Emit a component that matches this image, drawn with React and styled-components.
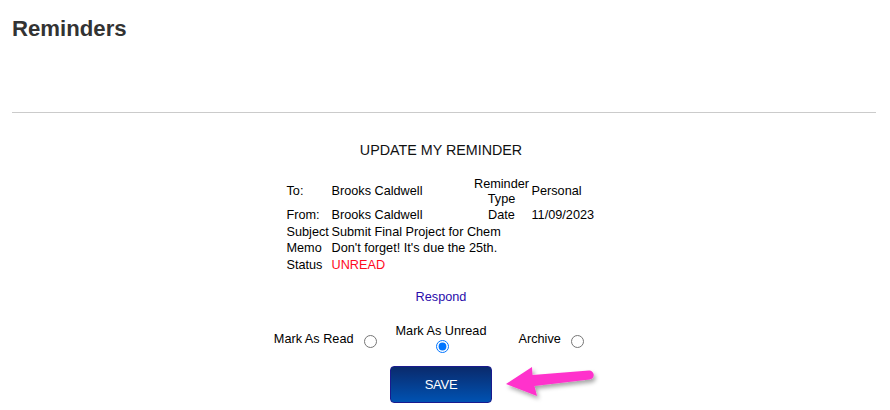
import React from 'react'
import styled, { createGlobalStyle } from 'styled-components'

const GlobalStyle = createGlobalStyle`
    body {
        margin: 0;
        background: #fff;
        font-family: 'Liberation Sans', Arial, sans-serif;
    }
`

const Page = styled.div`
    padding: 16px 14px 0 12px;
    font-family: 'Liberation Sans', Arial, sans-serif;
`

const Title = styled.h1`
    margin: 0;
    font-size: 22.2px;
    line-height: 25px;
    font-weight: bold;
    color: #333;
`

const Divider = styled.div`
    margin-top: 71px;
    height: 1px;
    background: #cbcbcb;
`

const Form = styled.div`
    display: flex;
    flex-direction: column;
    align-items: center;
    padding-right: 6px;
`

const Heading = styled.div`
    margin-top: 29px;
    font-size: 14.3px;
    line-height: 16px;
    color: #111;
`

const InfoTable = styled.table`
    margin-top: 18px;
    width: 311px;
    table-layout: fixed;
    border-collapse: collapse;
    font-size: 12.7px;
    line-height: 14.5px;
    color: #000;

    td {
        padding: 1px;
        vertical-align: middle;
        white-space: nowrap;
    }
`

const TypeCell = styled.td`
    && {
        text-align: center;
        white-space: normal;
    }
`

const Status = styled.span`
    color: #ff0a1e;
`

const Respond = styled.a`
    margin-top: 17px;
    font-size: 12.7px;
    line-height: 14px;
    color: #2a0cab;
    text-decoration: none;
    cursor: pointer;
`

const Options = styled.div`
    margin-top: 20px;
    width: 100%;
    display: grid;
    grid-template-columns: 1fr auto 1fr;
    align-items: start;
    font-size: 12.7px;
    line-height: 14px;
    color: #000;
`

const Option = styled.label`
    display: flex;
    align-items: center;
    margin-top: 5px;
    justify-self: ${p => (p.$side === 'left' ? 'end' : 'start')};
    margin-right: ${p => (p.$side === 'left' ? '16px' : '0')};
    margin-left: ${p => (p.$side === 'right' ? '32px' : '0')};
`

const StackedOption = styled.label`
    display: flex;
    flex-direction: column;
    align-items: center;
`

const Radio = styled.input`
    width: 13px;
    height: 13px;
    margin: ${p => (p.$stacked ? '2px 0 0 2px' : '6px 3px 0 10px')};
`

const ButtonRow = styled.div`
    position: relative;
    margin-top: 13px;
    display: flex;
    justify-content: center;
`

const SaveButton = styled.button`
    width: 102px;
    height: 37px;
    border: 1px solid #1a1a8e;
    border-radius: 4px;
    background: linear-gradient(to bottom, #0a2a6c, #0052b2);
    color: #fff;
    font-family: 'Liberation Sans', Arial, sans-serif;
    font-size: 13px;
    letter-spacing: -0.3px;
    cursor: pointer;
`

const Arrow = styled.svg`
    position: absolute;
    left: calc(50% + 58px);
    top: -7px;
    overflow: visible;
`

const App = () => {
    return (
        <>
            <GlobalStyle />
            <Page>
                <Title>Reminders</Title>
                <Divider />
                <Form>
                    <Heading>UPDATE MY REMINDER</Heading>
                    <InfoTable>
                        <colgroup>
                            <col style={{ width: 45 }} />
                            <col style={{ width: 142 }} />
                            <col style={{ width: 58 }} />
                            <col style={{ width: 66 }} />
                        </colgroup>
                        <tbody>
                            <tr>
                                <td>To:</td>
                                <td>Brooks Caldwell</td>
                                <TypeCell>Reminder Type</TypeCell>
                                <td>Personal</td>
                            </tr>
                            <tr>
                                <td>From:</td>
                                <td>Brooks Caldwell</td>
                                <TypeCell>Date</TypeCell>
                                <td>11/09/2023</td>
                            </tr>
                            <tr>
                                <td>Subject</td>
                                <td colSpan={3}>Submit Final Project for Chem</td>
                            </tr>
                            <tr>
                                <td>Memo</td>
                                <td colSpan={3}>Don't forget! It's due the 25th.</td>
                            </tr>
                            <tr>
                                <td>Status</td>
                                <td colSpan={3}><Status>UNREAD</Status></td>
                            </tr>
                        </tbody>
                    </InfoTable>
                    <Respond>Respond</Respond>
                    <Options>
                        <Option $side="left">
                            Mark As Read
                            <Radio type="radio" name="mark" readOnly />
                        </Option>
                        <StackedOption>
                            Mark As Unread
                            <Radio type="radio" name="mark" $stacked defaultChecked />
                        </StackedOption>
                        <Option $side="right">
                            Archive
                            <Radio type="radio" name="mark" readOnly />
                        </Option>
                    </Options>
                    <ButtonRow>
                        <SaveButton>SAVE</SaveButton>
                        <Arrow width="100" height="45" viewBox="0 0 100 45">
                            <defs>
                                <filter id="arrowShadow" x="-20%" y="-30%" width="140%" height="170%">
                                    <feDropShadow dx="2" dy="3" stdDeviation="2" floodColor="#000" floodOpacity="0.35" />
                                </filter>
                            </defs>
                            <path
                                d="M7,25 L33,8 L33.5,16 L90,11.5 A4.5,4.5 0 0 1 90.5,20.5 L35.5,27 L38,37 Z"
                                fill="#ff33cc"
                                filter="url(#arrowShadow)"
                            />
                        </Arrow>
                    </ButtonRow>
                </Form>
            </Page>
        </>
    )
}

export default App
